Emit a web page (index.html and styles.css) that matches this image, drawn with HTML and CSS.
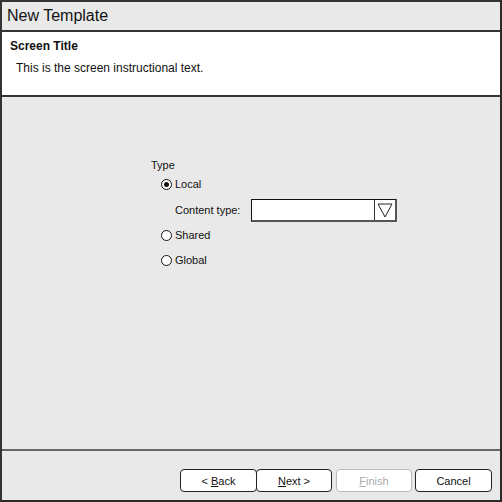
FILE: index.html
```html
<!DOCTYPE html>
<html>
<head>
<meta charset="utf-8">
<link rel="stylesheet" href="styles.css">
</head>
<body>
<div class="window">
  <div class="titlebar">New Template</div>
  <div class="header">
    <div class="screen-title">Screen Title</div>
    <div class="instructions">This is the screen instructional text.</div>
  </div>
  <div class="content">
    <div class="form">
      <div class="label-type">Type</div>
      <div class="radio-row">
        <span class="radio checked"></span><span>Local</span>
      </div>
      <div class="field-row">
        <span class="field-label">Content type:</span>
        <div class="combo">
          <div class="combo-input"></div>
          <div class="combo-btn">
            <svg width="18" height="18" viewBox="0 0 18 18"><path d="M2 3 L16 3 L9 16 Z" fill="none" stroke="#222" stroke-width="1"/></svg>
          </div>
        </div>
      </div>
      <div class="radio-row">
        <span class="radio"></span><span>Shared</span>
      </div>
      <div class="radio-row">
        <span class="radio"></span><span>Global</span>
      </div>
    </div>
  </div>
  <div class="footer">
    <div class="btn-group">
      <button class="btn">&lt; <u>B</u>ack</button>
      <button class="btn"><u>N</u>ext &gt;</button>
    </div>
    <button class="btn disabled"><u>F</u>inish</button>
    <button class="btn">Cancel</button>
  </div>
</div>
</body>
</html>
```
FILE: styles.css
```css
* { box-sizing: border-box; }
html, body { margin: 0; padding: 0; }
body {
  width: 502px;
  height: 502px;
  font-family: "Liberation Sans", Arial, sans-serif;
  color: #111;
  background: #e9e9e9;
}
.window {
  width: 502px;
  height: 502px;
  border-left: 2px solid #333;
  border-top: 2px solid #333;
  border-right: 2px solid #2a2a2a;
  border-bottom: 2px solid #2a2a2a;
  background: #e9e9e9;
  display: flex;
  flex-direction: column;
}
.titlebar {
  height: 30px;
  font-size: 16px;
  padding: 5px 0 0 5px;
  border-bottom: 2px solid #333;
  background: #e9e9e9;
  color: #111;
}
.header {
  height: 65px;
  background: #fff;
  border-bottom: 2px solid #333;
  padding: 7px 0 0 8px;
}
.screen-title {
  font-size: 12px;
  font-weight: bold;
  line-height: 14px;
}
.instructions {
  font-size: 12px;
  line-height: 14px;
  margin-top: 8px;
  padding-left: 6px;
}
.content {
  flex: 1;
  border-bottom: 2px solid #666;
  padding: 62px 0 0 149px;
}
.form {
  font-size: 11px;
  line-height: 13px;
}
.label-type { height: 13px; }
.radio-row {
  display: flex;
  align-items: center;
  padding-left: 10px;
  height: 13px;
  margin-top: 6px;
}
.radio-row + .radio-row { margin-top: 12px; }
.field-row + .radio-row { margin-top: 7px; }
.radio {
  width: 11px;
  height: 11px;
  border: 1px solid #111;
  border-radius: 50%;
  background: #fff;
  margin-right: 3px;
  display: inline-block;
  position: relative;
}
.radio.checked::after {
  content: "";
  position: absolute;
  left: 2px;
  top: 2px;
  width: 5px;
  height: 5px;
  border-radius: 50%;
  background: #111;
}
.field-row {
  display: flex;
  align-items: center;
  padding-left: 24px;
  margin-top: 8px;
  height: 23px;
}
.field-label { width: 76px; }
.combo {
  display: flex;
  width: 146px;
  height: 23px;
  border-top: 1px solid #111;
  border-left: 1px solid #111;
  border-right: 2px solid #555;
  border-bottom: 2px solid #555;
  background: #fff;
}
.combo-input { flex: 1; }
.combo-btn {
  width: 21px;
  border-left: 1px solid #333;
  display: flex;
  align-items: flex-start;
  justify-content: center;
  padding-top: 1px;
}
.footer {
  height: 49px;
  display: flex;
  align-items: flex-start;
  padding: 18px 0 0 178px;
}
.btn-group { display: flex; }
.btn {
  width: 77px;
  height: 23px;
  border: 1px solid #222;
  border-radius: 4px;
  background: #fff;
  font-family: "Liberation Sans", Arial, sans-serif;
  font-size: 11px;
  color: #111;
  padding: 0;
}
.btn-group .btn + .btn { margin-left: -1px; width: 76px; }
.btn-group { margin-right: 4px; }
.btn.disabled {
  color: #aaa;
  border-color: #bbb;
  margin-right: 3px;
  width: 76px;
}
.btn u { text-decoration: underline; }
```
